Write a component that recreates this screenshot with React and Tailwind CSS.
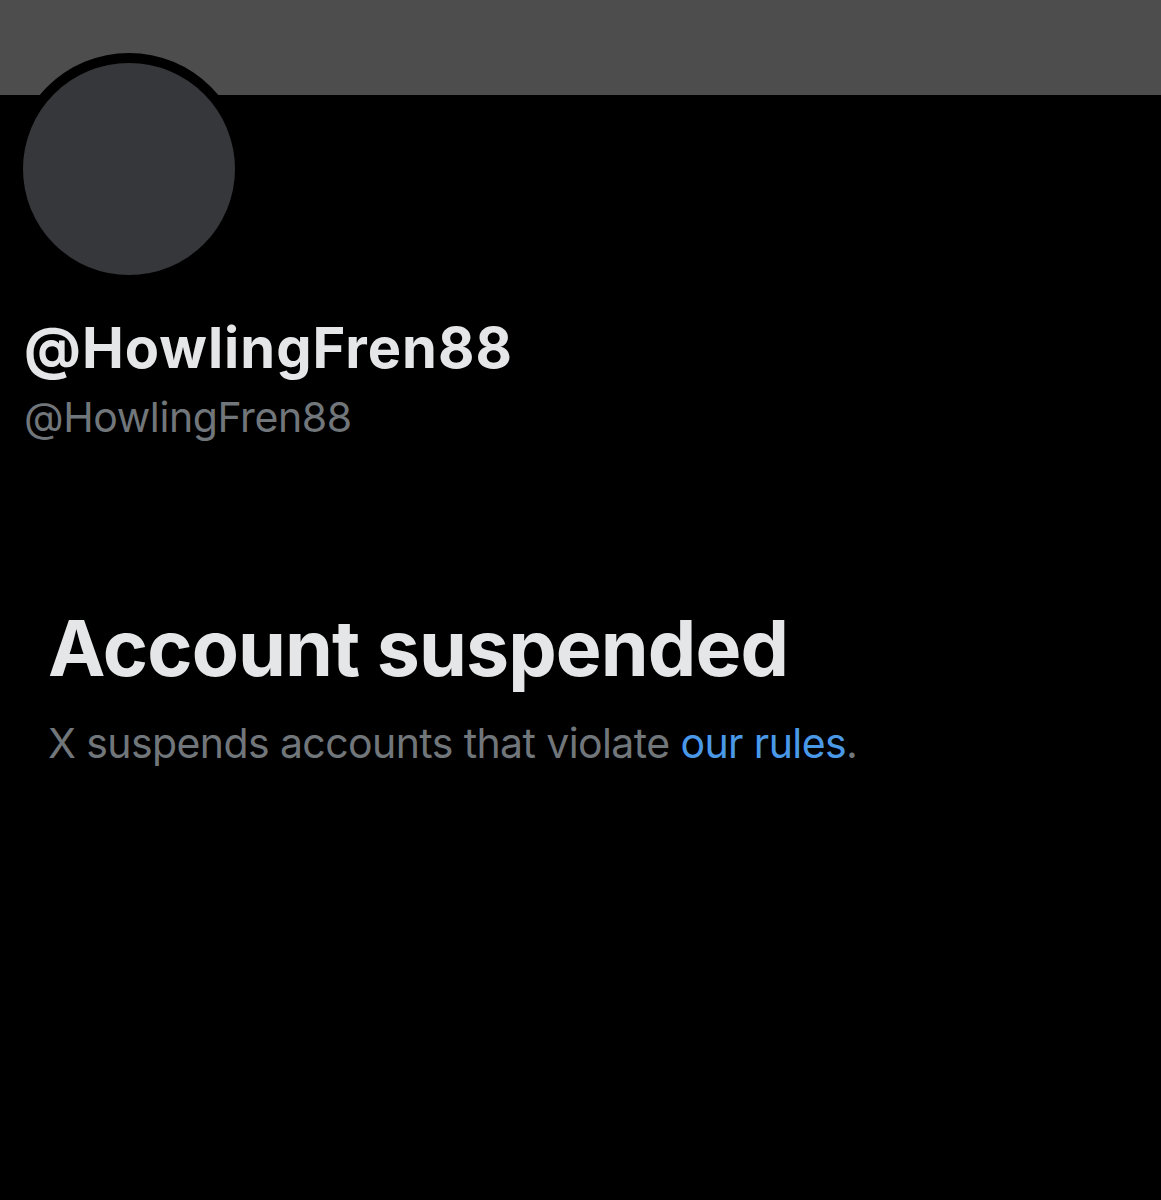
export default function App() {
  return (
    <div
      className="w-[1161px] h-[1200px] bg-black overflow-hidden"
      style={{ fontFamily: 'Inter, "Liberation Sans", sans-serif' }}
    >
      <div className="h-[95px] bg-[#4d4d4d]" />
      <div className="pl-[13px] -mt-[42px]">
        <div className="w-[232px] h-[232px] rounded-full bg-black p-[10px]">
          <div className="w-full h-full rounded-full bg-[#36373b]" />
        </div>
      </div>
      <div className="px-[24px] mt-[31px]">
        <p className="text-[56px] leading-[64px] font-bold text-[#e4e6e7] tracking-[1px]">
          @HowlingFren88
        </p>
        <p className="text-[41px] leading-[48px] text-[#71767b] mt-[13px] tracking-[-0.4px]">
          @HowlingFren88
        </p>
      </div>
      <div className="px-[48px] mt-[162px]">
        <h1 className="text-[77px] leading-[90px] font-bold text-[#e4e6e7] tracking-[-0.9px]">
          Account suspended
        </h1>
        <p className="text-[41px] leading-[50px] text-[#71767b] mt-[25px] tracking-[-0.6px]">
          X suspends accounts that violate{' '}
          <a href="#" className="text-[#4a99e9]">
            our rules
          </a>
          .
        </p>
      </div>
    </div>
  );
}
